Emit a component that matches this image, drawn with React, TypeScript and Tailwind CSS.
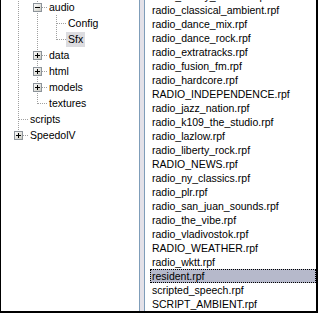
import React from 'react';

type TreeNode = {
  label: string;
  depth: number;
  pass: boolean[];
  last: boolean;
  toggle?: 'plus' | 'minus';
  selected?: boolean;
};

const TREE: TreeNode[] = [
  { label: 'audio', depth: 1, pass: [true], last: false, toggle: 'minus' },
  { label: 'Config', depth: 2, pass: [true, true], last: false },
  { label: 'Sfx', depth: 2, pass: [true, true], last: true, selected: true },
  { label: 'data', depth: 1, pass: [true], last: false, toggle: 'plus' },
  { label: 'html', depth: 1, pass: [true], last: false, toggle: 'plus' },
  { label: 'models', depth: 1, pass: [true], last: false, toggle: 'plus' },
  { label: 'textures', depth: 1, pass: [true], last: true },
  { label: 'scripts', depth: 0, pass: [], last: false },
  { label: 'SpeedolV', depth: 0, pass: [], last: true, toggle: 'plus' },
];

const FILES = [
  'radio_bobby_konders.rpf',
  'radio_classical_ambient.rpf',
  'radio_dance_mix.rpf',
  'radio_dance_rock.rpf',
  'radio_extratracks.rpf',
  'radio_fusion_fm.rpf',
  'radio_hardcore.rpf',
  'RADIO_INDEPENDENCE.rpf',
  'radio_jazz_nation.rpf',
  'radio_k109_the_studio.rpf',
  'radio_lazlow.rpf',
  'radio_liberty_rock.rpf',
  'RADIO_NEWS.rpf',
  'radio_ny_classics.rpf',
  'radio_plr.rpf',
  'radio_san_juan_sounds.rpf',
  'radio_the_vibe.rpf',
  'radio_vladivostok.rpf',
  'RADIO_WEATHER.rpf',
  'radio_wktt.rpf',
  'resident.rpf',
  'scripted_speech.rpf',
  'SCRIPT_AMBIENT.rpf',
];

const DOT = '#a0a0a0';

// one 19px column of tree guide lines
const Guide = ({ kind, last, toggle }: { kind: 'pass' | 'none' | 'node'; last?: boolean; toggle?: 'plus' | 'minus' }) => (
  <svg width="19" height="16" className="shrink-0 block" shapeRendering="crispEdges">
    {kind === 'pass' && <line x1="9.5" y1="0" x2="9.5" y2="16" stroke={DOT} strokeDasharray="1 1" />}
    {kind === 'node' && (
      <>
        <line x1="9.5" y1="0" x2="9.5" y2={last ? 9 : 16} stroke={DOT} strokeDasharray="1 1" />
        <line x1="10" y1="8.5" x2="19" y2="8.5" stroke={DOT} strokeDasharray="1 1" />
        {toggle && (
          <>
            <defs>
              <linearGradient id="tb" x1="0" y1="0" x2="1" y2="1">
                <stop offset="0" stopColor="#ffffff" />
                <stop offset="1" stopColor="#c9c9c0" />
              </linearGradient>
            </defs>
            <rect x="5.5" y="4.5" width="8" height="8" fill="url(#tb)" stroke="#8c939a" />
            <line x1="7" y1="8.5" x2="12" y2="8.5" stroke="#000" />
            {toggle === 'plus' && <line x1="9.5" y1="6" x2="9.5" y2="11" stroke="#000" />}
          </>
        )}
      </>
    )}
  </svg>
);

const TreeRow = ({ node }: { node: TreeNode }) => (
  <div className="flex h-4 items-center">
    {node.pass.map((p, i) => (
      <Guide key={i} kind={p ? 'pass' : 'none'} />
    ))}
    <Guide kind="node" last={node.last} toggle={node.toggle} />
    <span className={`mt-px h-[15px] leading-[15px] px-[2px] whitespace-nowrap ${node.selected ? 'bg-[#dcdce0]' : ''}`}>
      {node.label}
    </span>
  </div>
);

export default function App() {
  return (
    <div
      className="w-[318px] h-[313px] flex overflow-hidden bg-white border-l border-r-2 border-b-2 border-black text-black text-[10.5px]"
      style={{ fontFamily: '"Liberation Sans", Arial, sans-serif' }}
    >
      {/* folder tree */}
      <div className="w-[139px] shrink-0 border-r border-[#7f9db9] overflow-hidden">
        <div className="-mt-px pl-[8px]">
          {TREE.map(n => (
            <TreeRow key={n.label} node={n} />
          ))}
        </div>
      </div>

      {/* splitter */}
      <div className="w-[4px] shrink-0 bg-[#e4e1e8]" />

      {/* file list */}
      <div className="flex-1 border-l border-[#7f9db9] overflow-hidden">
        <div className="-mt-[11px]">
          {FILES.map(f =>
            f === 'resident.rpf' ? (
              <div
                key={f}
                className="ml-[5px] h-[14px] leading-[12px] pl-[1px] bg-[#b6b9cb] border border-dotted border-black whitespace-nowrap"
              >
                {f}
              </div>
            ) : (
              <div key={f} className="ml-[5px] h-[14px] leading-[14px] pl-[2px] whitespace-nowrap">
                {f}
              </div>
            )
          )}
        </div>
      </div>
    </div>
  );
}
